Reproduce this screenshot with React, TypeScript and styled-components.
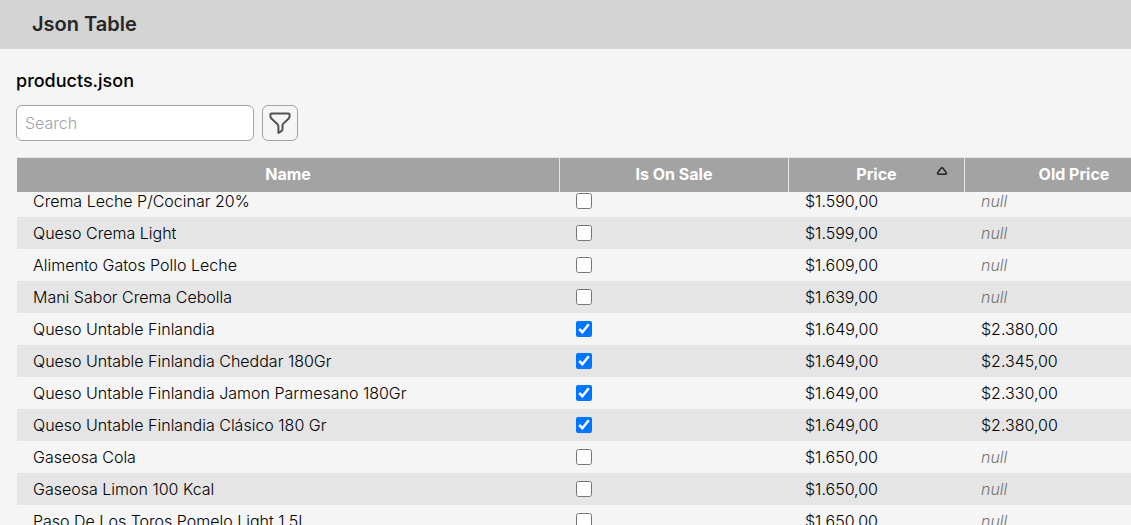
import { useLayoutEffect, useRef } from "react";
import styled, { createGlobalStyle } from "styled-components";

const GlobalStyle = createGlobalStyle`
  *, *::before, *::after { box-sizing: border-box; }
  body {
    margin: 0;
    background: #f5f5f5;
    color: #000;
    font: 300 16px/24px Inter, sans-serif;
  }
`;

const Page = styled.div`
  display: flex;
  flex-direction: column;
  height: 100vh;
`;

const TopBar = styled.header`
  flex: none;
  padding: 10px 32px 11px;
  background: #d4d4d4;
`;

const Title = styled.h1`
  margin: 0;
  color: #262626;
  font-size: 20px;
  font-weight: 600;
  line-height: 28px;
`;

const Content = styled.main`
  display: flex;
  flex: 1;
  flex-direction: column;
  min-height: 0;
  padding: 18px 0 0 16px;
`;

const FileName = styled.h2`
  margin: 0;
  font-size: 18px;
  font-weight: 500;
  line-height: 28px;
`;

const Toolbar = styled.div`
  display: flex;
  flex: none;
  gap: 8px;
  padding: 10px 0 16px;
`;

const SearchInput = styled.input`
  width: 238px;
  height: 36px;
  padding: 0 8px;
  border: 1px solid #a3a3a3;
  border-radius: 6px;
  background: #fff;
  color: inherit;
  font: inherit;

  &::placeholder { color: #9ca3af; }
`;

const FilterButton = styled.button`
  display: grid;
  place-items: center;
  width: 36px;
  height: 36px;
  padding: 0;
  border: 1px solid #a3a3a3;
  border-radius: 6px;
  background: transparent;
  color: #525252;
`;

const TableScroller = styled.div`
  flex: 1;
  min-height: 0;
  margin-left: 1px;
  overflow: auto;
  border-top: 1px solid #e5e5e5;
  scrollbar-width: none;
`;

const Table = styled.table`
  width: 100%;
  min-width: 1167px;
  border-spacing: 0;
  table-layout: fixed;
`;

const Column = styled.col<{ $width: number }>`
  width: ${({ $width }) => $width}px;
`;

const HeaderCell = styled.th`
  position: sticky;
  top: 0;
  z-index: 1;
  height: 34px;
  padding: 0 16px 2px;
  border-right: 1px solid #e5e5e5;
  background: #a3a3a3;
  color: #fff;
  font-weight: 700;
  text-align: center;
`;

const SortMark = styled.span`
  position: absolute;
  top: 8px;
  right: 16px;
  display: flex;
  color: #262626;
`;

const Row = styled.tr`
  &:nth-child(even) { background: #e5e5e5; }
`;

const Cell = styled.td`
  height: 32px;
  padding: 0 16px;
  white-space: nowrap;
`;

const Checkbox = styled.input`
  display: block;
  width: 16px;
  height: 16px;
  margin: 0;
`;

const NullValue = styled.em`
  color: #737373;
`;

type Product = { name: string; onSale: boolean; price: string; oldPrice: string | null };

const products: Product[] = [
  { name: "Crema Leche P/Cocinar 20%", onSale: false, price: "$1.590,00", oldPrice: null },
  { name: "Queso Crema Light", onSale: false, price: "$1.599,00", oldPrice: null },
  { name: "Alimento Gatos Pollo Leche", onSale: false, price: "$1.609,00", oldPrice: null },
  { name: "Mani Sabor Crema Cebolla", onSale: false, price: "$1.639,00", oldPrice: null },
  { name: "Queso Untable Finlandia", onSale: true, price: "$1.649,00", oldPrice: "$2.380,00" },
  { name: "Queso Untable Finlandia Cheddar 180Gr", onSale: true, price: "$1.649,00", oldPrice: "$2.345,00" },
  { name: "Queso Untable Finlandia Jamon Parmesano 180Gr", onSale: true, price: "$1.649,00", oldPrice: "$2.330,00" },
  { name: "Queso Untable Finlandia Clásico 180 Gr", onSale: true, price: "$1.649,00", oldPrice: "$2.380,00" },
  { name: "Gaseosa Cola", onSale: false, price: "$1.650,00", oldPrice: null },
  { name: "Gaseosa Limon 100 Kcal", onSale: false, price: "$1.650,00", oldPrice: null },
  { name: "Paso De Los Toros Pomelo Light 1.5L", onSale: false, price: "$1.650,00", oldPrice: null },
];

const columns = [
  { title: "Name", width: 543 },
  { title: "Is On Sale", width: 229 },
  { title: "Price", width: 176, sorted: true },
  { title: "Old Price", width: 219 },
];

const INITIAL_SCROLL = 7;

const FunnelIcon = () => (
  <svg width="24" height="24" viewBox="0 0 24 24" fill="none" stroke="currentColor" strokeWidth="2" strokeLinejoin="round" aria-hidden="true">
    <path d="M3.600 2.400h16.800a1.200 1.200 0 0 1 1.200 1.200v1.700c0 .9-.3 1.600-.9 2.200l-5.300 5.100c-.6.6-.9 1.200-.9 2v3.800c0 .6-.3 1.100-.8 1.400L10.400 21.900v-6.500c0-.9-.3-1.600-.9-2.200L3.400 7.600c-.6-.6-1-1.400-1-2.300V3.600a1.200 1.200 0 0 1 1.200-1.200z" />
  </svg>
);

const TriangleIcon = () => (
  <svg width="12" height="10" viewBox="0 0 12 10" fill="none" stroke="currentColor" strokeWidth="1.6" strokeLinejoin="round" aria-hidden="true">
    <path d="M5 2.200 1.800 6.600c-.5.8-.2 1.600.8 1.600h6.800c1 0 1.300-.8.8-1.600L7 2.200c-.5-.7-1.500-.7-2 0z" />
  </svg>
);

export default function App() {
  const scroller = useRef<HTMLDivElement>(null);

  useLayoutEffect(() => {
    if (scroller.current) scroller.current.scrollTop = INITIAL_SCROLL;
  }, []);

  return (
    <Page>
      <GlobalStyle />
      <TopBar>
        <Title>Json Table</Title>
      </TopBar>
      <Content>
        <FileName>products.json</FileName>
        <Toolbar>
          <SearchInput type="search" placeholder="Search" aria-label="Search" />
          <FilterButton type="button" aria-label="Filter">
            <FunnelIcon />
          </FilterButton>
        </Toolbar>
        <TableScroller ref={scroller}>
          <Table>
            <colgroup>
              {columns.map((column) => (
                <Column key={column.title} $width={column.width} />
              ))}
            </colgroup>
            <thead>
              <tr>
                {columns.map((column) => (
                  <HeaderCell key={column.title} scope="col" aria-sort={column.sorted ? "ascending" : undefined}>
                    {column.title}
                    {column.sorted && (
                      <SortMark>
                        <TriangleIcon />
                      </SortMark>
                    )}
                  </HeaderCell>
                ))}
              </tr>
            </thead>
            <tbody>
              {products.map((product) => (
                <Row key={product.name}>
                  <Cell>{product.name}</Cell>
                  <Cell>
                    <Checkbox type="checkbox" defaultChecked={product.onSale} aria-label={`${product.name} is on sale`} />
                  </Cell>
                  <Cell>{product.price}</Cell>
                  <Cell>{product.oldPrice ?? <NullValue>null</NullValue>}</Cell>
                </Row>
              ))}
            </tbody>
          </Table>
        </TableScroller>
      </Content>
    </Page>
  );
}
